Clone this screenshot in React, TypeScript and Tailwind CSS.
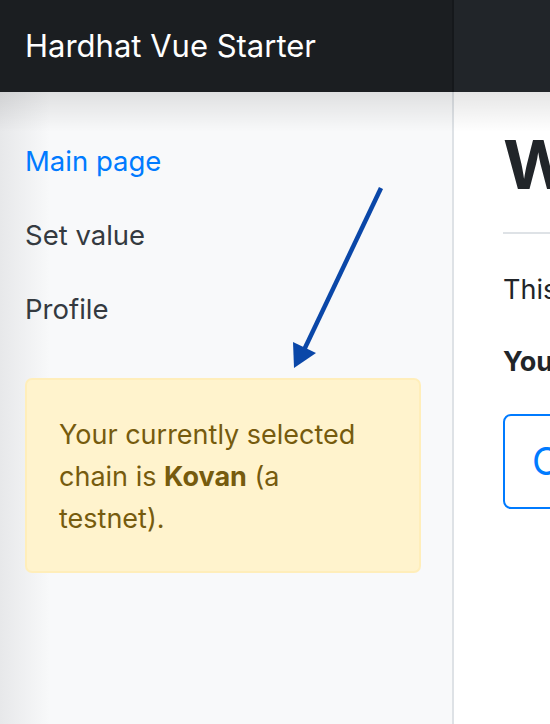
import React from 'react';

const navItems = [
  { name: 'Main page', active: true },
  { name: 'Set value', active: false },
  { name: 'Profile', active: false },
];

export default function App() {
  return (
    <div className="relative h-[724px] w-[550px] overflow-hidden bg-white font-['Inter',sans-serif] text-[#212529]">
      <header className="flex h-[92px]">
        <div className="flex w-[452px] items-center bg-[#1b1e21] px-[25px]">
          <span className="text-[31px] text-white">Hardhat Vue Starter</span>
        </div>
        <div className="w-[2px] bg-[#15181b]" />
        <div className="flex-1 bg-[#212529]" />
      </header>

      <div className="flex h-[632px]">
        <aside className="relative w-[454px] shrink-0 border-r-2 border-[#dee2e6] bg-[#f8f9fa] px-[25px] pt-[33px]">
          <div className="pointer-events-none absolute inset-y-0 left-0 w-[50px] bg-gradient-to-r from-[#e7e8ea] to-transparent" />
          <nav className="relative flex flex-col">
            {navItems.map((item) => (
              <a
                key={item.name}
                href="#"
                className={`flex h-[74px] items-center text-[27.5px] ${item.active ? 'text-[#007bff]' : 'text-[#343a40]'}`}
              >
                {item.name}
              </a>
            ))}
          </nav>
          <div className="relative mt-[31px] w-[396px] rounded-[7px] border-2 border-[#ffeeba] bg-[#fff3cd] px-[32px] pt-[34px] pb-[31px] text-[27px] leading-[42px] text-[#765b0e]">
            Your currently selected chain is <b>Kovan</b> (a testnet).
          </div>
        </aside>

        <main className="flex-1 overflow-hidden whitespace-nowrap pl-[49px] pt-[32px]">
          <h1 className="text-[68px] font-bold leading-[80px]">Welcome</h1>
          <hr className="mt-[28px] border-t-2 border-[#dee2e6]" />
          <p className="mt-[36px] text-[27px] leading-[40px]">This is a Hardhat Vue starter.</p>
          <p className="mt-[32px] text-[27px] font-bold leading-[40px]">Your address:</p>
          <button className="mt-[32px] h-[95px] rounded-[8px] border-2 border-[#007bff] px-[27px] text-[38px] text-[#007bff]">
            Connect wallet
          </button>
        </main>
      </div>

      <div className="pointer-events-none absolute left-0 right-0 top-[92px] h-[40px] bg-gradient-to-b from-black/10 to-transparent" />

      <svg className="pointer-events-none absolute left-0 top-0" width="550" height="724">
        <line x1="381" y1="188" x2="304" y2="350" stroke="#0a47a8" strokeWidth="4.5" />
        <polygon points="293,342 316,353 294,368" fill="#0a47a8" />
      </svg>
    </div>
  );
}
